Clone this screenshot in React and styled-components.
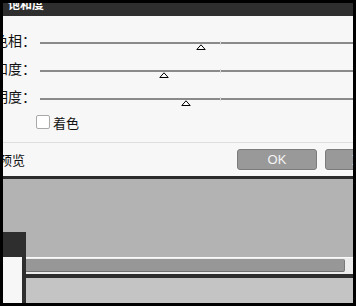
import React from 'react';
import styled, { createGlobalStyle } from 'styled-components';

const GlobalStyle = createGlobalStyle`
  html, body {
    margin: 0;
    padding: 0;
    background: #000;
  }
  body {
    font-family: "Noto Sans CJK SC", "Noto Sans", sans-serif;
  }
`;

// slider values, range -> fraction of the track
const sliders = [
    { label: '色相：', value: -19, min: -180, max: 180 },
    { label: '饱和度：', value: -31, min: -100, max: 100 },
    { label: '明度：', value: -19, min: -100, max: 100 },
];

const Frame = styled.div`
  padding: 3px;
  width: 350px;
  height: 300px;
`;

const Viewport = styled.div`
  width: 350px;
  height: 300px;
  overflow: hidden;
  display: flex;
  flex-direction: column;
  background: #b3b3b3;
`;

const Dialog = styled.div`
  flex: none;
  margin-left: -40px;
  width: 480px;
  background: #f7f7f7;
`;

const TitleBar = styled.div`
  height: 13px;
  overflow: hidden;
  padding-left: 45px;
  background: #2e2e2e;
`;

const TitleText = styled.div`
  margin-top: -5px;
  font-size: 12px;
  line-height: 12px;
  font-weight: bold;
  color: #fff;
  white-space: nowrap;
`;

const Body = styled.div`
  padding-top: 13px;
`;

const SliderRow = styled.div`
  display: flex;
  align-items: center;
  height: 28px;
`;

const Label = styled.div`
  width: 56px;
  margin-left: 17px;
  margin-right: 4px;
  margin-top: -6px;
  text-align: right;
  font-size: 14px;
  line-height: 18px;
  color: #111;
  white-space: nowrap;
`;

const Track = styled.div`
  position: relative;
  width: 360px;
  height: 2px;
  background: #8a8a8a;
`;

const Tick = styled.div`
  position: absolute;
  left: 50%;
  top: -1px;
  width: 1px;
  height: 4px;
  background: #dadada;
`;

const Thumb = styled.svg`
  position: absolute;
  top: 2px;
  width: 10px;
  height: 7px;
  margin-left: -5px;
`;

const CheckRow = styled.label`
  display: flex;
  align-items: center;
  gap: 3px;
  height: 14px;
  margin-top: 2px;
  padding-left: 73px;
  font-size: 13px;
  color: #111;
`;

const Box = styled.span`
  display: block;
  box-sizing: border-box;
  width: 14px;
  height: 14px;
  border: 1px solid #a9a9a9;
  border-radius: 2px;
  background: #fff;
`;

const Separator = styled.div`
  margin-top: 13px;
  height: 1px;
  background: #dedede;
`;

const Footer = styled.div`
  display: flex;
  align-items: center;
  padding: 6px 38px 6px 18px;
`;

const Preview = styled.label`
  display: flex;
  align-items: center;
  gap: 4px;
  font-size: 13px;
  color: #111;
`;

const Buttons = styled.div`
  display: flex;
  gap: 8px;
  margin-left: auto;
`;

const Button = styled.button`
  box-sizing: border-box;
  width: 80px;
  height: 21px;
  padding: 0;
  border: 1px solid #7b7b7b;
  border-radius: 3px;
  background: #999;
  box-shadow: 0 0 2px #fff;
  color: #f4f4f4;
  font-family: "Liberation Sans", "Noto Sans CJK SC", sans-serif;
  font-size: 13px;
`;

const Workspace = styled.div`
  flex: 1;
  display: flex;
  border-top: 3px solid #2b2b2b;
  background: #b3b3b3;
`;

const LeftPanel = styled.div`
  width: 23px;
  display: flex;
  flex-direction: column;
`;

const PanelSpacer = styled.div`
  height: 53px;
`;

const PanelHeader = styled.div`
  height: 25px;
  background: #2e2e2e;
`;

const PanelBody = styled.div`
  flex: 1;
  background: #f7f7f7;
  border-right: 4px solid #2e2e2e;
`;

const Main = styled.div`
  flex: 1;
  display: flex;
  flex-direction: column;
`;

const Canvas = styled.div`
  height: 78px;
`;

const ScrollRow = styled.div`
  height: 17px;
  box-sizing: border-box;
  padding: 1px 8px 2px 0;
  border-top: 1px solid #fafafa;
  background: #ececec;
`;

const ScrollBar = styled.div`
  height: 13px;
  box-sizing: border-box;
  background: #979797;
  border-bottom: 1px solid #707070;
  border-right: 1px solid #7a7a7a;
  border-radius: 0 2px 2px 0;
`;

const DarkLine = styled.div`
  height: 4px;
  background: #2e2e2e;
`;

const Lower = styled.div`
  flex: 1;
  background: #c4c4c4;
`;

const Slider = ({ label, value, min, max }) => {
    const frac = (value - min) / (max - min);
    return (
        <SliderRow>
            <Label>{label}</Label>
            <Track>
                <Tick />
                <Thumb viewBox="0 0 10 7" style={{ left: `${frac * 100}%` }}>
                    <polygon points="5,0.8 9.2,5.5 0.8,5.5" fill="#fff" stroke="#000" strokeWidth="1" />
                </Thumb>
            </Track>
        </SliderRow>
    );
};

function App() {
    return (
        <Frame>
            <GlobalStyle />
            <Viewport>
                <Dialog>
                    <TitleBar>
                        <TitleText>饱和度</TitleText>
                    </TitleBar>
                    <Body>
                        {sliders.map((s) => (
                            <Slider key={s.label} {...s} />
                        ))}
                        <CheckRow>
                            <Box />
                            着色
                        </CheckRow>
                        <Separator />
                        <Footer>
                            <Preview>
                                <Box />
                                预览
                            </Preview>
                            <Buttons>
                                <Button>OK</Button>
                                <Button>取消</Button>
                            </Buttons>
                        </Footer>
                    </Body>
                </Dialog>
                <Workspace>
                    <LeftPanel>
                        <PanelSpacer />
                        <PanelHeader />
                        <PanelBody />
                    </LeftPanel>
                    <Main>
                        <Canvas />
                        <ScrollRow>
                            <ScrollBar />
                        </ScrollRow>
                        <DarkLine />
                        <Lower />
                    </Main>
                </Workspace>
            </Viewport>
        </Frame>
    );
}

export default App;
